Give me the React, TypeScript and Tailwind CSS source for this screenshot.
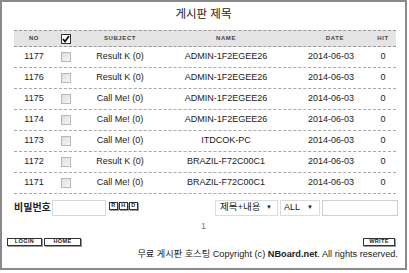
import React from 'react';

type Post = { no: number; subject: string; name: string; date: string; hit: number };

const posts: Post[] = [
  { no: 1177, subject: 'Result K (0)', name: 'ADMIN-1F2EGEE26', date: '2014-06-03', hit: 0 },
  { no: 1176, subject: 'Result K (0)', name: 'ADMIN-1F2EGEE26', date: '2014-06-03', hit: 0 },
  { no: 1175, subject: 'Call Me! (0)', name: 'ADMIN-1F2EGEE26', date: '2014-06-03', hit: 0 },
  { no: 1174, subject: 'Call Me! (0)', name: 'ADMIN-1F2EGEE26', date: '2014-06-03', hit: 0 },
  { no: 1173, subject: 'Call Me! (0)', name: 'ITDCOK-PC', date: '2014-06-03', hit: 0 },
  { no: 1172, subject: 'Result K (0)', name: 'BRAZIL-F72C00C1', date: '2014-06-03', hit: 0 },
  { no: 1171, subject: 'Call Me! (0)', name: 'BRAZIL-F72C00C1', date: '2014-06-03', hit: 0 },
];

const font = { fontFamily: '"Liberation Sans", "Noto Sans CJK KR", sans-serif' };

const Box = ({ checked }: { checked?: boolean }) => (
  <span
    className={`flex w-[10px] h-[10px] items-center justify-center border ${
      checked ? 'border-[#333] bg-white' : 'border-[#b8b8b8] bg-gradient-to-br from-[#dedede] to-[#f6f6f6]'
    }`}
  >
    {checked && (
      <svg width="8" height="8" viewBox="0 0 8 8">
        <path d="M1 4 L3 6.5 L7 1" fill="none" stroke="#111" strokeWidth="1.8" />
      </svg>
    )}
  </span>
);

const SmallBtn = ({ label, w }: { label: string; w: string }) => (
  <span
    className={`flex ${w} h-[8px] items-center justify-center border border-[#333] bg-white text-[5.5px] font-bold leading-none tracking-[0.4px] text-[#222] shadow-[1px_1px_0_#999]`}
  >
    {label}
  </span>
);

const cols = ['w-[38px]', 'w-[28px]', 'w-[80px]', 'w-[132px]', 'w-[78px]', 'w-[26px]'];

export default function App() {
  return (
    <div className="w-[409px] h-[273px] bg-white" style={font}>
      <div className="w-[407px] h-[270px] border-2 border-[#8a8a8a] flex flex-col">
        <div className="shrink-0 h-[28px] pt-[4px] text-center text-[11.5px] leading-[16px] text-[#222]">게시판 제목</div>

        <div className="shrink-0 ml-[12px] w-[382px]">
          <div className="h-[17px] flex items-center bg-[#e4e4e4] border-t border-[#999] border-b border-dashed border-b-[#999] text-[6px] font-bold tracking-[0.6px] text-[#444]">
            <div className={`${cols[0]} text-center pl-[2px]`}>NO</div>
            <div className={`${cols[1]} flex justify-center`}><Box checked /></div>
            <div className={`${cols[2]} text-center`}>SUBJECT</div>
            <div className={`${cols[3]} text-center`}>NAME</div>
            <div className={`${cols[4]} text-center pl-[8px]`}>DATE</div>
            <div className={`${cols[5]} text-center`}>HIT</div>
          </div>

          {posts.map((p) => (
            <div
              key={p.no}
              className="h-[21px] flex items-center border-b border-dashed border-[#a8a8a8] text-[9px] text-[#222]"
            >
              <div className={`${cols[0]} text-center pl-[2px]`}>{p.no}</div>
              <div className={`${cols[1]} flex justify-center`}><Box /></div>
              <div className={`${cols[2]} text-center`}>{p.subject}</div>
              <div className={`${cols[3]} text-center`}>{p.name}</div>
              <div className={`${cols[4]} text-center`}>{p.date}</div>
              <div className={`${cols[5]} text-center`}>{p.hit}</div>
            </div>
          ))}
        </div>

        <div className="shrink-0 ml-[12px] w-[384px] mt-[5px] h-[17px] flex items-center">
          <span className="w-[38px] text-[10px] font-bold text-[#222] leading-none">비밀번호</span>
          <span className="w-[54px] h-[16px] border border-[#d8d8d8] bg-white" />
          <span className="ml-[3px] flex gap-[1px] -mt-[4px]">
            <SmallBtn label="R" w="w-[9px]" />
            <SmallBtn label="H" w="w-[9px]" />
            <SmallBtn label="D" w="w-[9px]" />
          </span>
          <span className="ml-auto flex items-center gap-[2px]">
            <span className="w-[63px] h-[16px] border border-[#dcdcdc] flex items-center justify-between pl-[4px] pr-[5px] text-[9.5px] text-[#222]">
              제목+내용<span className="text-[6px]">▼</span>
            </span>
            <span className="w-[40px] h-[16px] border border-[#dcdcdc] flex items-center justify-between pl-[3px] pr-[6px] text-[9px] text-[#222]">
              ALL<span className="text-[6px]">▼</span>
            </span>
            <span className="w-[76px] h-[16px] border border-[#cfcfcf] bg-white" />
          </span>
        </div>

        <div className="shrink-0 mt-[5px] h-[11px] text-center text-[9px] leading-[11px] text-[#777]">1</div>

        <div className="shrink-0 ml-[5px] mr-[10px] mt-[5px] h-[9px] flex items-center">
          <span className="flex gap-[2px]">
            <SmallBtn label="LOGIN" w="w-[35px]" />
            <SmallBtn label="HOME" w="w-[37px]" />
          </span>
          <span className="ml-auto flex">
            <SmallBtn label="WRITE" w="w-[32px]" />
          </span>
        </div>

        <div className="shrink-0 mt-[2px] mr-[7px] text-right text-[9.2px] leading-[12px] text-[#222]">
          무료 게시판 호스팅 Copyright (c) <b>NBoard.net</b>. All rights reserved.
        </div>
      </div>
    </div>
  );
}
